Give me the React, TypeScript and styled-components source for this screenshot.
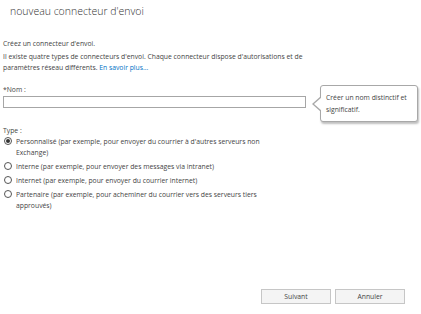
import React, {FC} from 'react';
import styled, {createGlobalStyle} from "styled-components";

const GlobalStyle = createGlobalStyle`
  html, body {
    margin: 0;
    padding: 0;
    background: #ffffff;
  }
  body {
    font-family: "Open Sans", "Noto Sans", sans-serif;
    color: #444444;
  }
`

const Page = styled.div`
  display: flex;
  flex-direction: column;
  height: 314px;
  box-sizing: border-box;
  padding: 0 3px 10px 3px;
`

const Title = styled.h1`
  margin: 4px 0 0 7px;
  font-size: 10.5px;
  font-weight: 300;
  line-height: 14px;
  color: #333333;
`

const Text = styled.p`
  margin: 0;
  font-size: 6.8px;
  line-height: 11px;
  color: #444444;
`

const Intro = styled(Text)`
  margin-top: 19.5px;
`

const Description = styled(Text)`
  margin-top: 2px;
  width: 302px;
`

const Link = styled.a`
  color: #0072c6;
  text-decoration: none;
`

const FieldLabel = styled(Text)`
  margin-top: 11px;
`

const FieldRow = styled.div`
  display: flex;
  align-items: flex-start;
  margin-top: 1.5px;
`

const NameInput = styled.input`
  flex: none;
  width: 303px;
  height: 12px;
  box-sizing: border-box;
  margin: 0;
  padding: 0 4px;
  border: 1px solid #a6a6a6;
  background: #ffffff;
  font: inherit;
  font-size: 6.8px;
  outline: none;
`

const Callout = styled.div`
  position: relative;
  flex: none;
  margin: -11px 0 0 14px;
  width: 98px;
  height: 37px;
  box-sizing: border-box;
  padding: 6px 4px 0 5px;
  border: 1px solid #a8a8a8;
  border-radius: 3px;
  background: #ffffff;
  box-shadow: 1px 2px 2px rgba(0, 0, 0, 0.25);
  font-size: 6.8px;
  line-height: 12px;
  color: #444444;

  &::before, &::after {
    content: "";
    position: absolute;
    top: 50%;
    width: 0;
    height: 0;
    border-style: solid;
  }
  &::before {
    left: -9px;
    margin-top: -8px;
    border-width: 8px 9px 8px 0;
    border-color: transparent #a8a8a8 transparent transparent;
  }
  &::after {
    left: -7px;
    margin-top: -7px;
    border-width: 7px 8px 7px 0;
    border-color: transparent #ffffff transparent transparent;
  }
`

const TypeLabel = styled(Text)`
  margin-top: 2.5px;
`

const RadioList = styled.div`
  display: flex;
  flex-direction: column;
  gap: 3px;
  margin-top: 0;
`

const RadioItem = styled.label`
  display: flex;
  align-items: flex-start;
  gap: 4px;
  width: 270px;
  font-size: 6.8px;
  line-height: 11px;
  color: #444444;
`

const RadioCircle = styled.span<{checked?: boolean}>`
  flex: none;
  position: relative;
  width: 8px;
  height: 8px;
  margin: 1.5px 0 0 1px;
  box-sizing: border-box;
  border: 1px solid #555555;
  border-radius: 50%;
  background: #ffffff;

  &::after {
    content: "";
    display: ${({checked}) => checked ? "block" : "none"};
    position: absolute;
    left: 1px;
    top: 1px;
    width: 4px;
    height: 4px;
    border-radius: 50%;
    background: #333333;
  }
`

const Footer = styled.div`
  display: flex;
  justify-content: flex-end;
  gap: 4px;
  margin-top: auto;
  padding-right: 13px;
`

const Button = styled.button`
  width: 70px;
  height: 15px;
  padding: 0;
  border: 1px solid #c6c6c6;
  background: #f4f4f4;
  font-family: inherit;
  font-size: 6.8px;
  color: #444444;
`

interface RadioOption {
    label: string
    checked?: boolean
}

const options: RadioOption[] = [
    {label: "Personnalisé (par exemple, pour envoyer du courrier à d'autres serveurs non Exchange)", checked: true},
    {label: "Interne (par exemple, pour envoyer des messages via intranet)"},
    {label: "Internet (par exemple, pour envoyer du courrier internet)"},
    {label: "Partenaire (par exemple, pour acheminer du courrier vers des serveurs tiers approuvés)"},
]

const App: FC = () => {
    return (
        <>
            <GlobalStyle/>
            <Page>
                <Title>nouveau connecteur d'envoi</Title>
                <Intro>Créez un connecteur d'envoi.</Intro>
                <Description>
                    Il existe quatre types de connecteurs d'envoi. Chaque connecteur dispose d'autorisations et
                    de paramètres réseau différents. <Link href="#">En savoir plus...</Link>
                </Description>
                <FieldLabel>*Nom :</FieldLabel>
                <FieldRow>
                    <NameInput type="text"/>
                    <Callout>Créer un nom distinctif et significatif.</Callout>
                </FieldRow>
                <TypeLabel>Type :</TypeLabel>
                <RadioList>
                    {options.map(option => (
                        <RadioItem key={option.label}>
                            <RadioCircle checked={option.checked}/>
                            <span>{option.label}</span>
                        </RadioItem>
                    ))}
                </RadioList>
                <Footer>
                    <Button>Suivant</Button>
                    <Button>Annuler</Button>
                </Footer>
            </Page>
        </>
    );
};

export default App;
